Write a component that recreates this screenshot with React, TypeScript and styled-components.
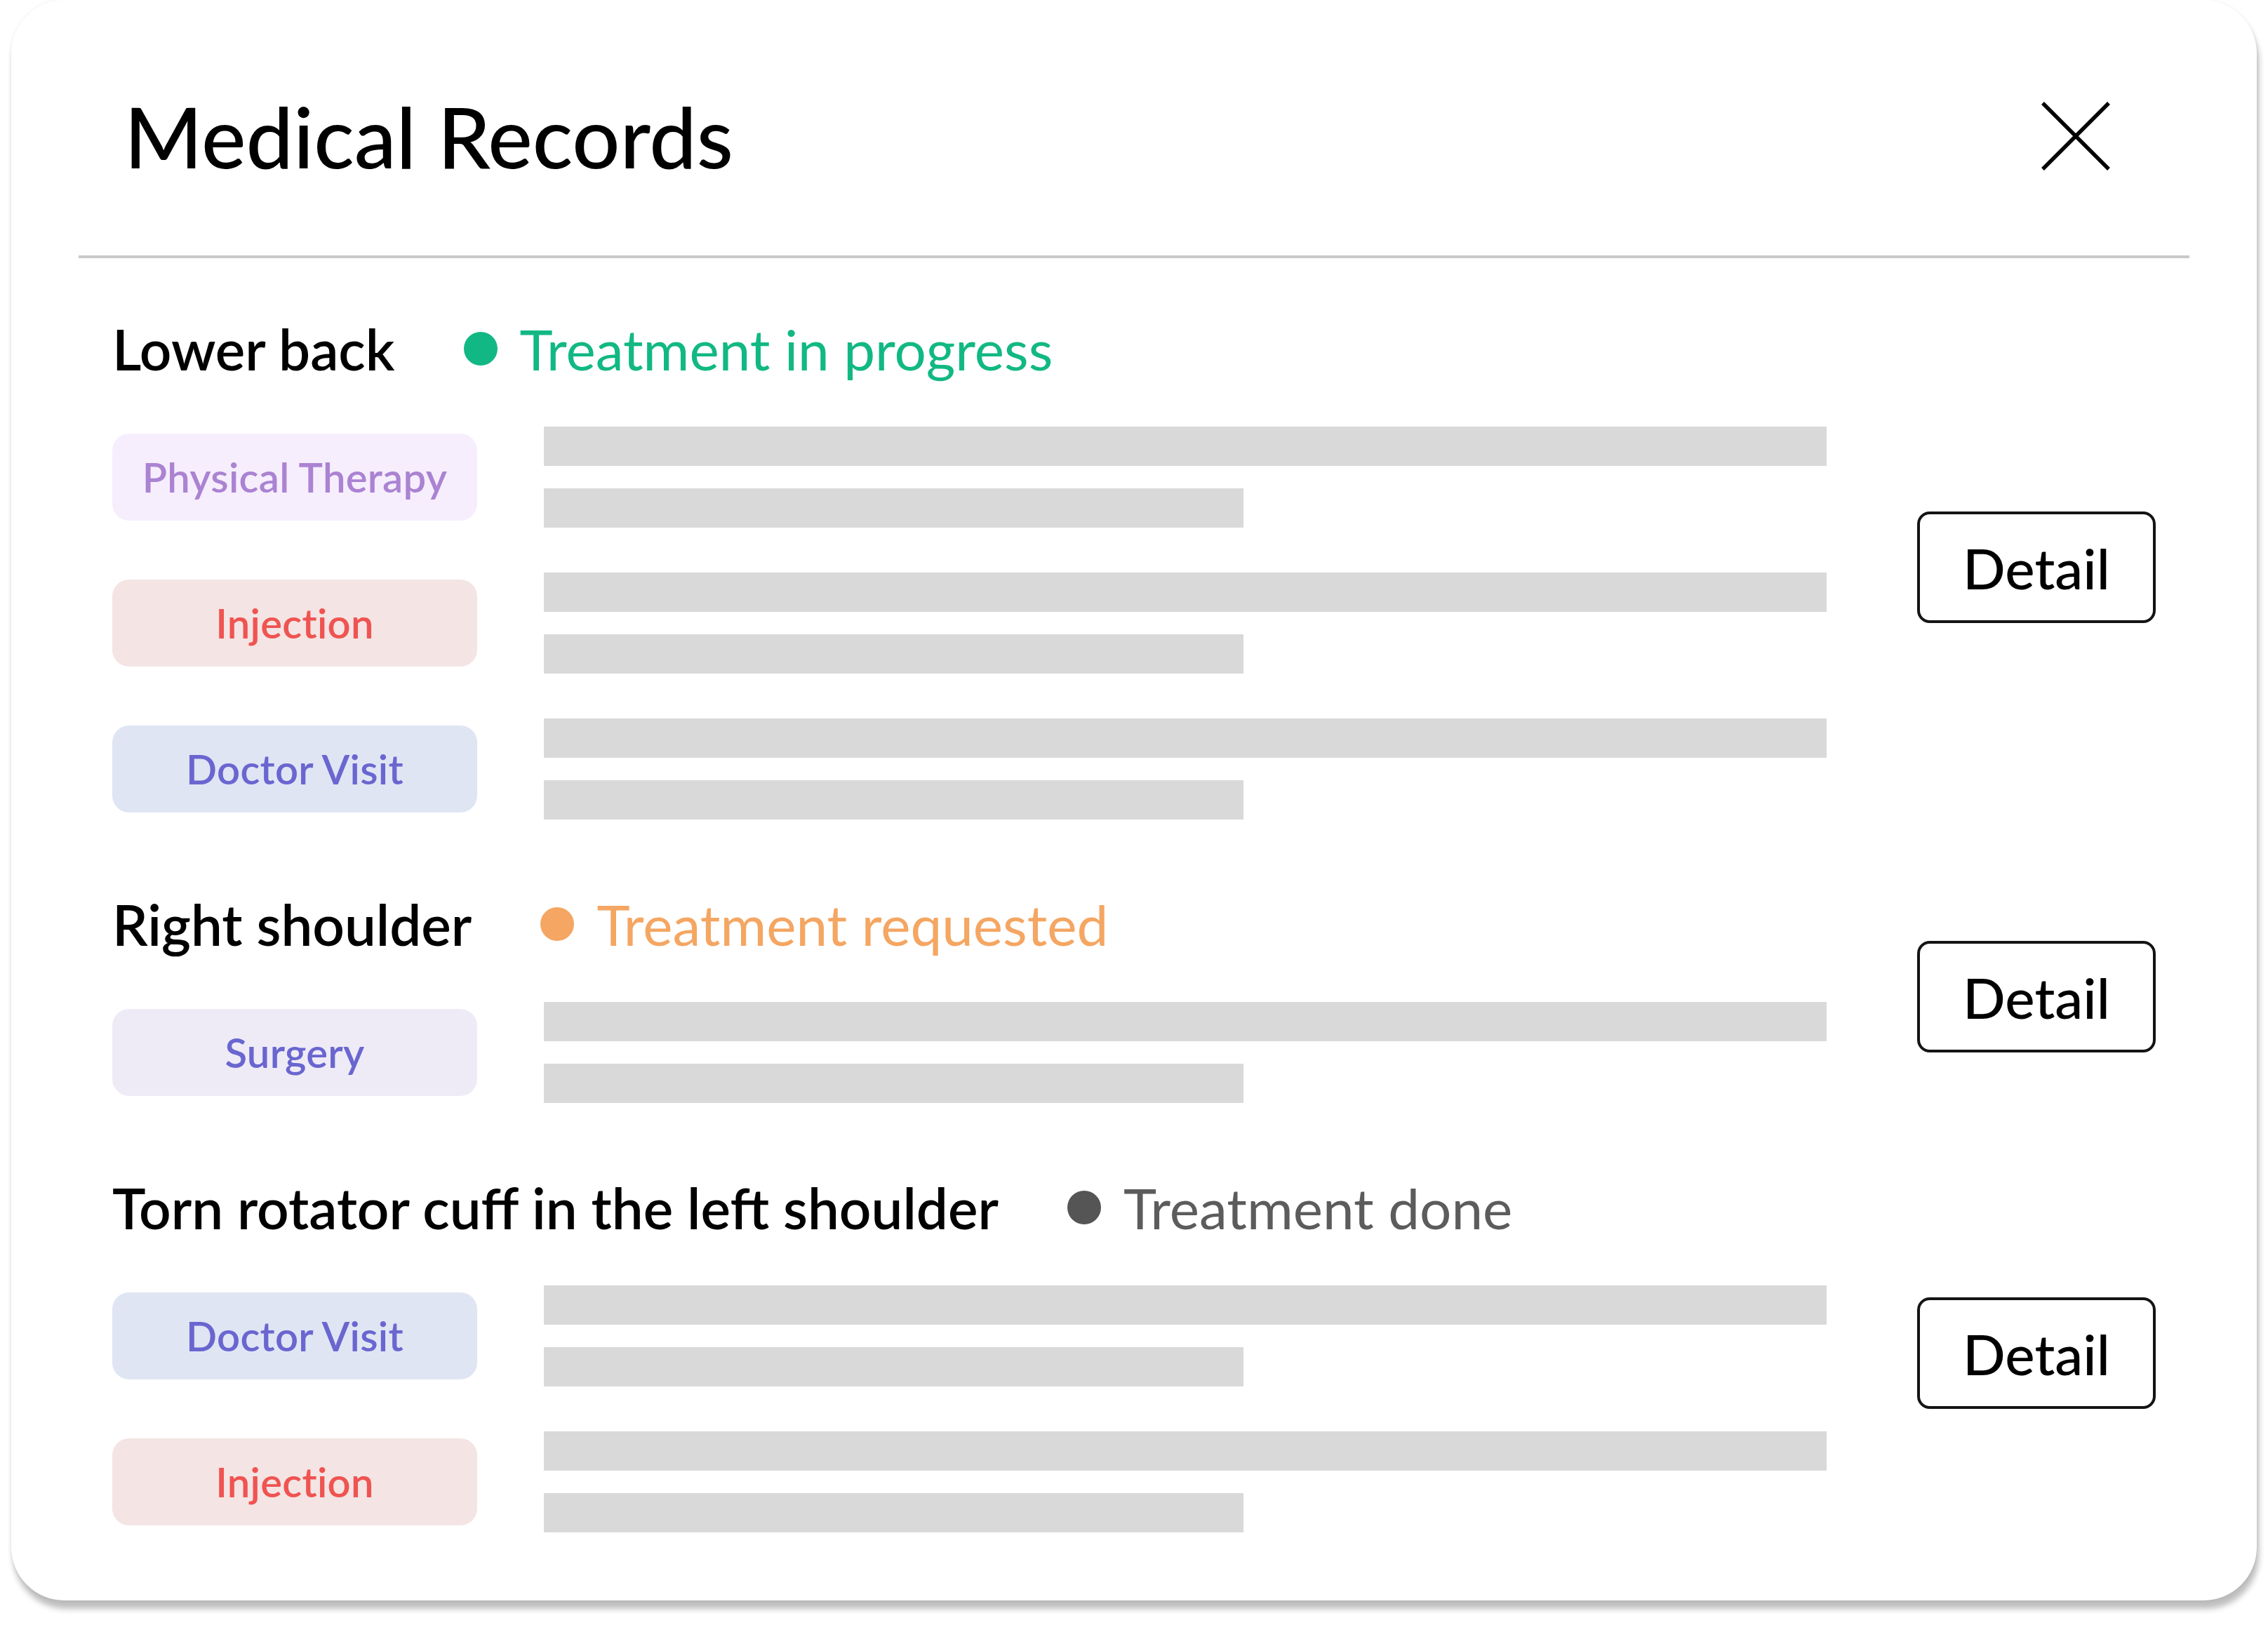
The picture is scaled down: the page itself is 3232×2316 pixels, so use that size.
import React from "react";
import styled, { createGlobalStyle } from "styled-components";

const GlobalStyle = createGlobalStyle`
  html, body {
    margin: 0;
    padding: 0;
    background: #ffffff;
  }
  body {
    font-family: Lato, "Open Sans", "Liberation Sans", sans-serif;
    color: #000;
  }
  * { box-sizing: border-box; }
`;

const Page = styled.div`
  width: 3232px;
  height: 2316px;
  padding: 0 16px;
  overflow: hidden;
`;

const Card = styled.div`
  width: 3200px;
  background: #ffffff;
  border-radius: 76px;
  box-shadow: 3px 12px 8px rgba(0, 0, 0, 0.26), 0 0 5px rgba(0, 0, 0, 0.07);
  padding-bottom: 97px;
`;

const Header = styled.header`
  display: flex;
  align-items: center;
  justify-content: space-between;
  padding: 122px 209px 0 161px;
`;

const Title = styled.h1`
  margin: 0;
  font-size: 120px;
  line-height: 144px;
  font-weight: 500;
  color: #000;
`;

const CloseButton = styled.button`
  display: flex;
  width: 98px;
  height: 98px;
  padding: 0;
  border: none;
  background: transparent;
  cursor: pointer;
`;

const Divider = styled.hr`
  margin: 98px 96px 0;
  height: 4px;
  border: none;
  background: #c8c9c9;
`;

const Body = styled.div`
  display: flex;
  flex-direction: column;
  gap: 101px;
  padding: 81px 144px 0;
`;

const Section = styled.section`
  display: flex;
  align-items: center;
  justify-content: space-between;
`;

const SectionMain = styled.div`
  display: flex;
  flex-direction: column;
  gap: 63px;
`;

const HeadingRow = styled.div`
  display: flex;
  align-items: center;
  gap: 98px;
  height: 96px;
`;

const Heading = styled.h2`
  margin: 0;
  font-size: 80px;
  line-height: 96px;
  font-weight: 600;
  color: #000;
  white-space: nowrap;
`;

const Status = styled.div<{ $color: string; $dot: string }>`
  display: flex;
  align-items: center;
  gap: 32px;
  font-size: 80px;
  line-height: 96px;
  font-weight: 400;
  color: ${(p) => p.$color};
  white-space: nowrap;

  &::before {
    content: "";
    width: 48px;
    height: 48px;
    border-radius: 50%;
    background: ${(p) => p.$dot};
    flex: none;
  }
`;

const Rows = styled.div`
  display: flex;
  flex-direction: column;
  gap: 64px;
`;

const Row = styled.div`
  display: flex;
  align-items: center;
  gap: 95px;
`;

const Tag = styled.span<{ $bg: string; $fg: string }>`
  display: flex;
  align-items: center;
  justify-content: center;
  width: 520px;
  height: 124px;
  border-radius: 24px;
  background: ${(p) => p.$bg};
  color: ${(p) => p.$fg};
  font-size: 58px;
  font-weight: 600;
  letter-spacing: 0.3px;
  padding-top: 0;
  padding-bottom: 2px;
  white-space: nowrap;
`;

const Lines = styled.div`
  display: flex;
  flex-direction: column;
  gap: 32px;
`;

const Line = styled.div<{ $short?: boolean }>`
  width: ${(p) => (p.$short ? "997px" : "1828px")};
  height: 56px;
  background: #d9d9d9;
`;

const DetailButton = styled.button`
  width: 340px;
  height: 159px;
  border: 4px solid #141414;
  border-radius: 18px;
  background: #ffffff;
  font-family: Lato, "Open Sans", "Liberation Sans", sans-serif;
  font-size: 80px;
  font-weight: 500;
  color: #000;
  padding: 0;
  cursor: pointer;
`;

type TagKind = "pt" | "inj" | "dv" | "sur";

const TAGS: Record<TagKind, { label: string; bg: string; fg: string }> = {
  pt: { label: "Physical Therapy", bg: "#f6eefd", fg: "#ab83d2" },
  inj: { label: "Injection", bg: "#f4e4e4", fg: "#ef5451" },
  dv: { label: "Doctor Visit", bg: "#e0e5f4", fg: "#6a66d0" },
  sur: { label: "Surgery", bg: "#eeebf7", fg: "#6a66d0" },
};

const STATUS = {
  progress: { label: "Treatment in progress", color: "#12b883", dot: "#12b883" },
  requested: { label: "Treatment requested", color: "#f4a662", dot: "#f4a662" },
  done: { label: "Treatment done", color: "#5c5c5c", dot: "#555555" },
};

const records: {
  title: string;
  status: keyof typeof STATUS;
  items: TagKind[];
}[] = [
  { title: "Lower back", status: "progress", items: ["pt", "inj", "dv"] },
  { title: "Right shoulder", status: "requested", items: ["sur"] },
  {
    title: "Torn rotator cuff in the left shoulder",
    status: "done",
    items: ["dv", "inj"],
  },
];

const CloseIcon = () => (
  <svg width="98" height="98" viewBox="0 0 98 98" fill="none">
    <path d="M2 2 L96 96 M96 2 L2 96" stroke="#000" strokeWidth="5.5" />
  </svg>
);

export default function App() {
  return (
    <>
      <GlobalStyle />
      <Page>
        <Card>
          <Header>
            <Title>Medical Records</Title>
            <CloseButton aria-label="Close">
              <CloseIcon />
            </CloseButton>
          </Header>
          <Divider />
          <Body>
            {records.map((r) => {
              const s = STATUS[r.status];
              return (
                <Section key={r.title}>
                  <SectionMain>
                    <HeadingRow>
                      <Heading>{r.title}</Heading>
                      <Status $color={s.color} $dot={s.dot}>
                        {s.label}
                      </Status>
                    </HeadingRow>
                    <Rows>
                      {r.items.map((k, i) => {
                        const t = TAGS[k];
                        return (
                          <Row key={i}>
                            <Tag $bg={t.bg} $fg={t.fg}>
                              {t.label}
                            </Tag>
                            <Lines>
                              <Line />
                              <Line $short />
                            </Lines>
                          </Row>
                        );
                      })}
                    </Rows>
                  </SectionMain>
                  <DetailButton>Detail</DetailButton>
                </Section>
              );
            })}
          </Body>
        </Card>
      </Page>
    </>
  );
}
